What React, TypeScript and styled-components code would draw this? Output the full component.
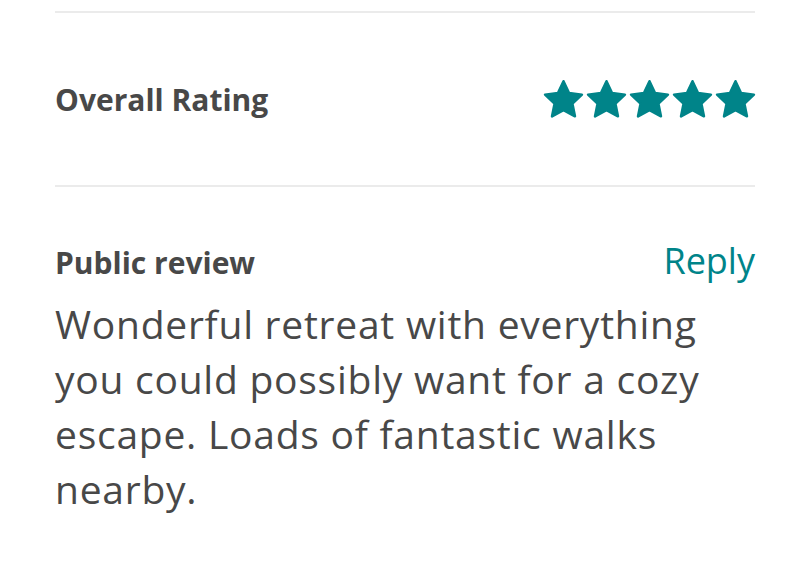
import styled, { createGlobalStyle } from "styled-components"

const GlobalStyle = createGlobalStyle`
body {
    margin: 0;
    background: #ffffff;
    font-family: "Open Sans", "Liberation Sans", sans-serif;
    color: #484848;
}
`

const Page = styled.div`
width: 794px;
height: 565px;
padding: 11px 39px 0 55px;
box-sizing: border-box;
overflow: hidden;
`

const Divider = styled.hr`
margin: 0;
border: none;
height: 2px;
background: #ebebeb;
`

const RatingRow = styled.div`
display: flex;
align-items: center;
justify-content: space-between;
height: 172px;
`

const Label = styled.h2`
margin: 0;
font-size: 30px;
font-weight: 700;
color: #484848;
`

const Stars = styled.div`
display: flex;
gap: 0;
margin-right: -2px;
`

const ReviewHead = styled.div`
display: flex;
justify-content: space-between;
align-items: baseline;
margin-top: 49px;
`

const ReplyLink = styled.a`
font-size: 36px;
color: #008489;
text-decoration: none;
`

const ReviewText = styled.p`
margin: 11px 0 0;
font-size: 39px;
letter-spacing: 0.75px;
line-height: 55px;
color: #484848;
`

const Star = () => (
    <svg width="43" height="43" viewBox="0 0 24 24">
        <path
            fill="#008489"
            stroke="#008489"
            strokeWidth="1.4"
            strokeLinejoin="round"
            d="M12 1.8l3.1 6.6 7.2.9-5.3 5 1.4 7.1L12 17.9l-6.4 3.5 1.4-7.1-5.3-5 7.2-.9z"
        />
    </svg>
)

export default function App() {
    return (
        <Page>
            <GlobalStyle />
            <Divider />
            <RatingRow>
                <Label>Overall Rating</Label>
                <Stars>
                    {[0, 1, 2, 3, 4].map(i => <Star key={i} />)}
                </Stars>
            </RatingRow>
            <Divider />
            <ReviewHead>
                <Label>Public review</Label>
                <ReplyLink href="#">Reply</ReplyLink>
            </ReviewHead>
            <ReviewText>
                Wonderful retreat with everything you could possibly want for a cozy escape. Loads of fantastic walks nearby.
            </ReviewText>
        </Page>
    )
}
